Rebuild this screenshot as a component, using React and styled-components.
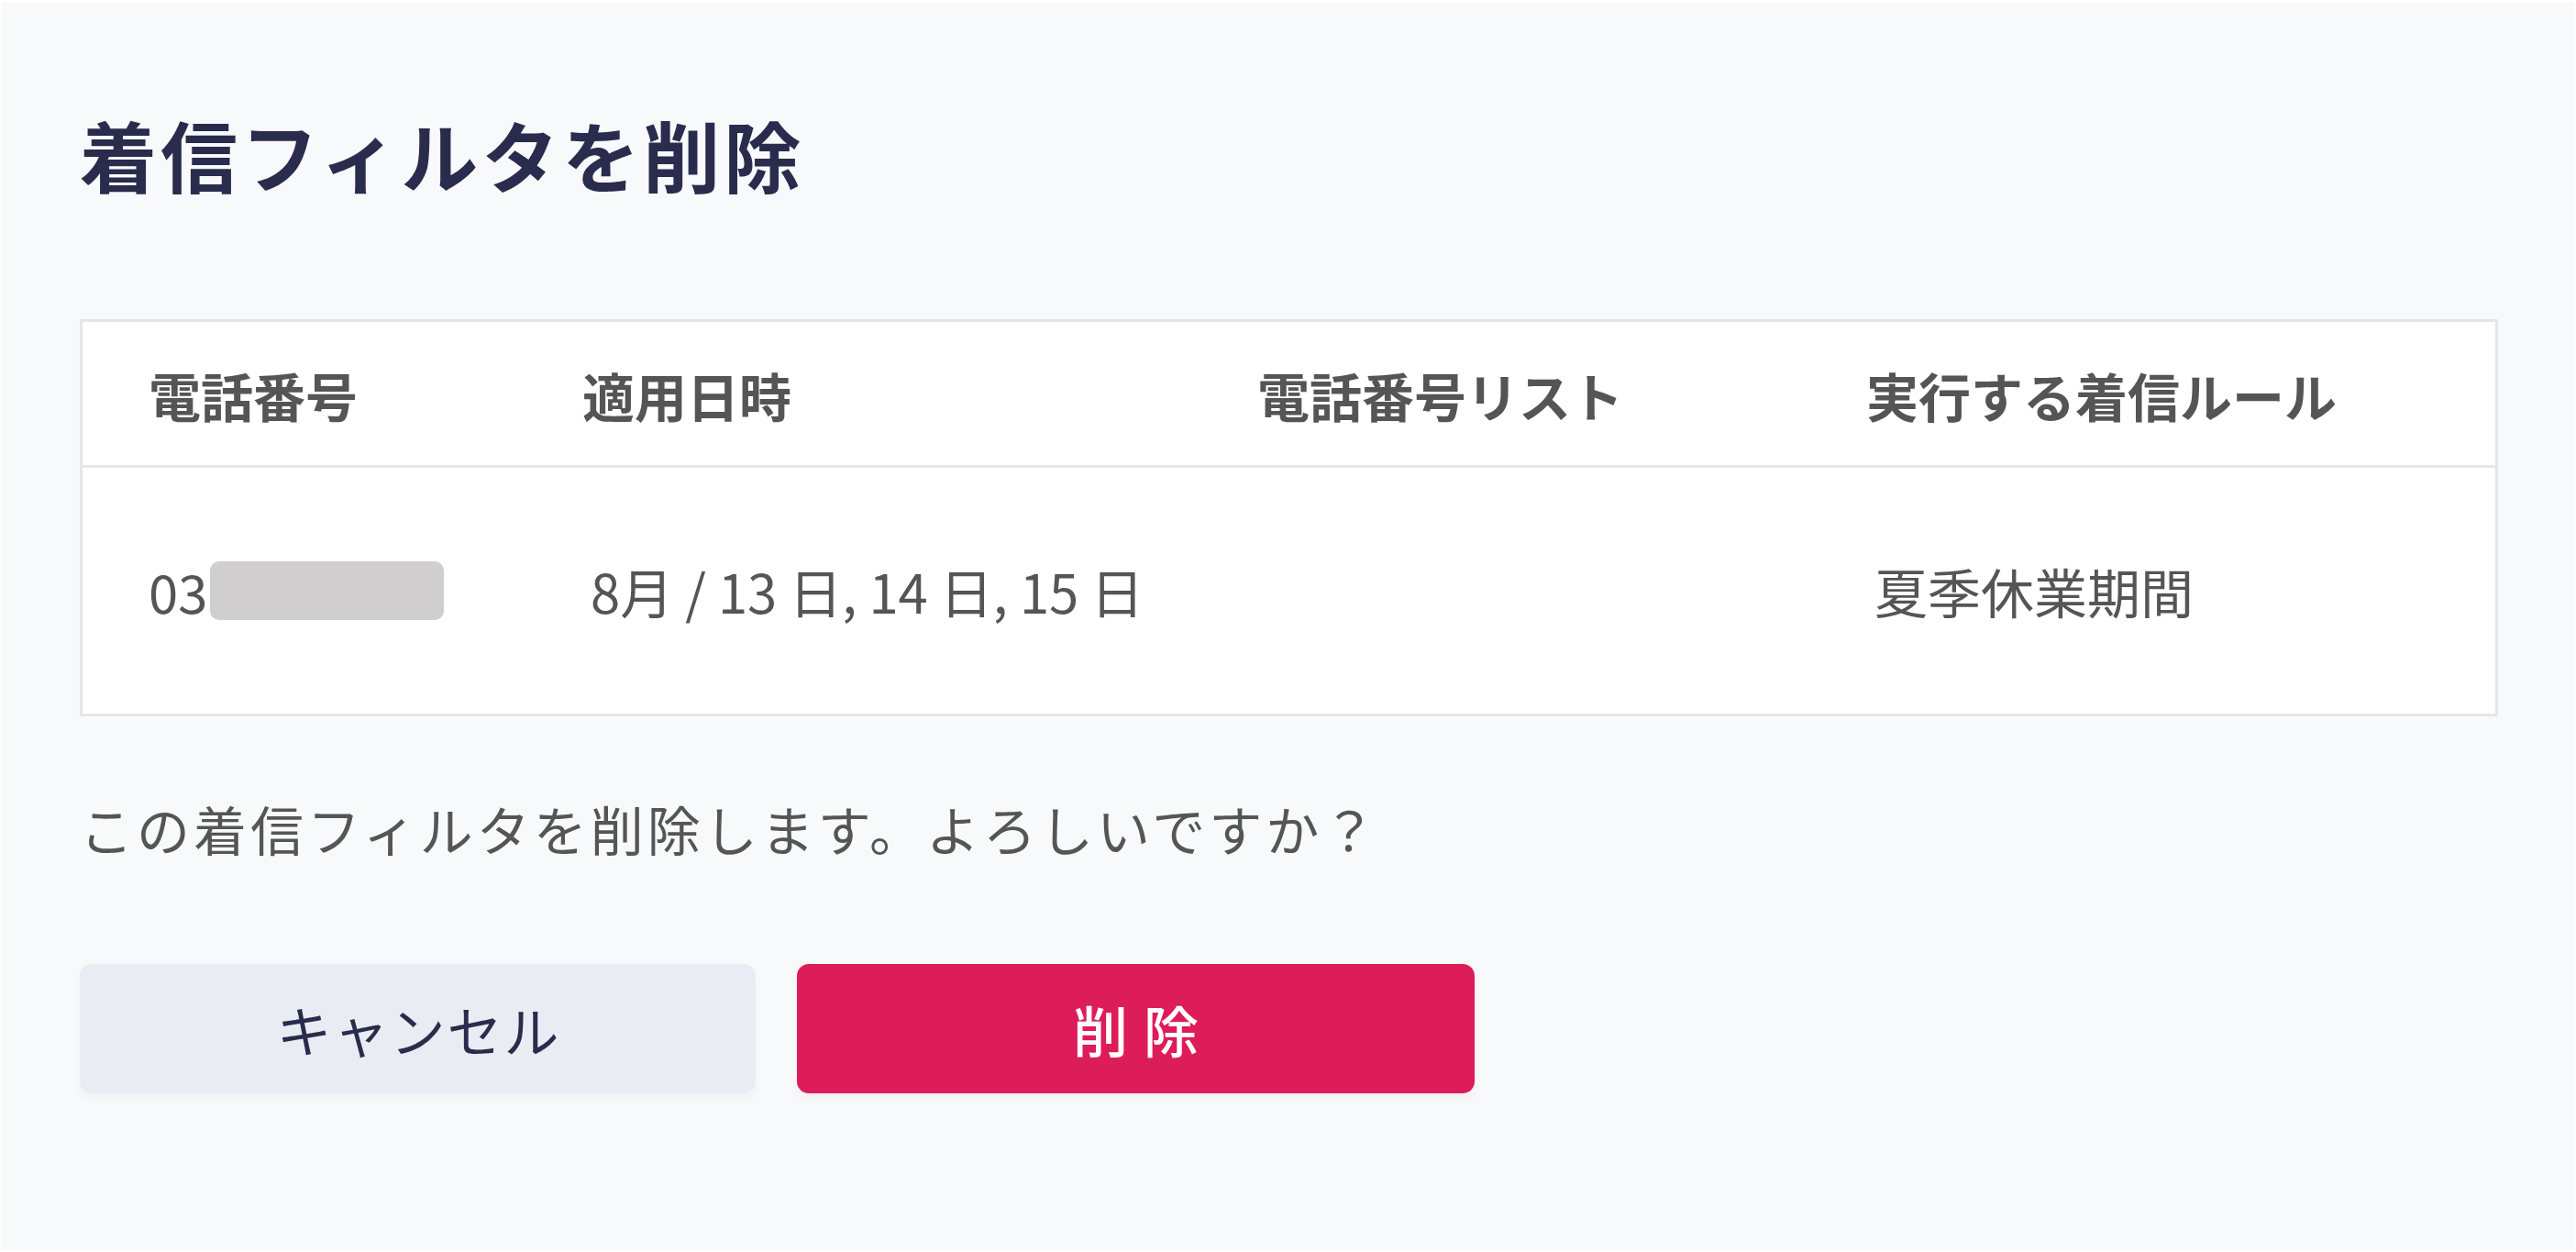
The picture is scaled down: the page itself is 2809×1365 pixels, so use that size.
import React from "react";
import styled, { createGlobalStyle } from "styled-components";

const Global = createGlobalStyle`
  html, body { margin: 0; padding: 0; background: #ffffff; }
  body { font-family: "Noto Sans CJK JP", "Noto Sans", sans-serif; }
  * { box-sizing: border-box; }
`;

const Panel = styled.div`
  margin: 3px 2px 3px 2px;
  height: 1359px;
  background: #f8f9fa;
  padding: 123px 83px 0 85px;
  display: flex;
  flex-direction: column;
  align-items: flex-start;
`;

const Title = styled.h1`
  margin: 0;
  font-size: 84px;
  line-height: 84px;
  font-weight: 700;
  letter-spacing: 4px;
  color: #2a2c4d;
`;

const Table = styled.div`
  margin-top: 138px;
  width: 100%;
  background: #ffffff;
  border: 3px solid #e6e6e6;
  display: grid;
  grid-template-columns: 473px 736px 664px 1fr;
`;

const HeadCell = styled.div`
  height: 159px;
  border-bottom: 3px solid #e6e6e6;
  padding-left: 72px;
  padding-top: 3px;
  display: flex;
  align-items: center;
  font-size: 57px;
  font-weight: 700;
  color: #555555;
  line-height: 1;
  white-space: nowrap;
`;

const BodyCell = styled.div`
  height: 268px;
  padding-left: ${(p) => 72 + (p.$indent || 0)}px;
  display: flex;
  align-items: center;
  font-size: 58px;
  font-weight: 400;
  color: #555555;
  line-height: 1;
  white-space: nowrap;
`;

const Redacted = styled.span`
  display: inline-block;
  width: 255px;
  height: 64px;
  margin-left: 3px;
  border-radius: 10px;
  background: #d0cecf;
`;

const Message = styled.p`
  margin: 93px 0 0 0;
  font-size: 58px;
  line-height: 58px;
  letter-spacing: 4px;
  color: #555555;
`;

const Actions = styled.div`
  margin-top: 119px;
  display: flex;
  gap: 45px;
`;

const Button = styled.button`
  width: ${(p) => (p.$danger ? "739px" : "737px")};
  height: 141px;
  border: none;
  border-radius: 13px;
  font-family: "Noto Sans CJK JP", "Noto Sans", sans-serif;
  font-size: 60px;
  font-weight: ${(p) => (p.$danger ? 500 : 400)};
  line-height: 1;
  cursor: pointer;
  background: ${(p) => (p.$danger ? "#dd1c5a" : "#e9edf3")};
  color: ${(p) => (p.$danger ? "#ffffff" : "#2a2c4d")};
  letter-spacing: ${(p) => (p.$danger ? "17px" : "2px")};
  text-indent: ${(p) => (p.$danger ? "17px" : "2px")};
  box-shadow: 0 6px 10px rgba(30, 40, 60, 0.04);
`;

export default function App() {
  return (
    <>
      <Global />
      <Panel>
        <Title>着信フィルタを削除</Title>
        <Table>
          <HeadCell>電話番号</HeadCell>
          <HeadCell>適用日時</HeadCell>
          <HeadCell>電話番号リスト</HeadCell>
          <HeadCell>実行する着信ルール</HeadCell>
          <BodyCell>
            03
            <Redacted />
          </BodyCell>
          <BodyCell $indent={9}>8月 / 13 日, 14 日, 15 日</BodyCell>
          <BodyCell />
          <BodyCell $indent={9}>夏季休業期間</BodyCell>
        </Table>
        <Message>この着信フィルタを削除します。よろしいですか？</Message>
        <Actions>
          <Button>キャンセル</Button>
          <Button $danger>削除</Button>
        </Actions>
      </Panel>
    </>
  );
}
